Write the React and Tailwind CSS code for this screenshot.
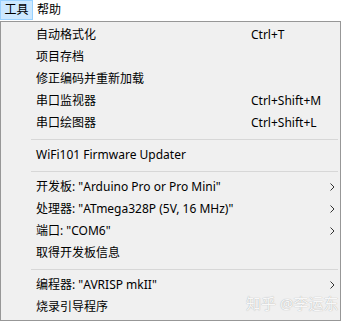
import React from "react";

const Arrow = () => (
  <svg width="5" height="8" viewBox="0 0 5 8" className="block">
    <path d="M0.5 0.5 L4 4 L0.5 7.5" fill="none" stroke="#333" strokeWidth="1" />
  </svg>
);

function Item({ label, shortcut, arrow }) {
  return (
    <div className="h-[22px] flex items-center pl-[35px] pr-[5px]">
      <div className="w-[215px] whitespace-nowrap">{label}</div>
      <div className="flex-1 whitespace-nowrap">{shortcut}</div>
      {arrow && <Arrow />}
    </div>
  );
}

function Sep() {
  return (
    <div className="h-[10px] flex items-center pl-[30px] pr-[2px]">
      <div className="h-px w-full bg-[#d7d7d7]" />
    </div>
  );
}

export default function App() {
  return (
    <div
      className="relative w-[341px] h-[321px] bg-white text-[12px] text-black overflow-hidden"
      style={{ fontFamily: '"Noto Sans", "Noto Sans CJK SC", sans-serif' }}
    >
      {/* menu bar */}
      <div className="h-[21px] flex items-start">
        <div className="h-[20px] w-[33px] bg-[#cce8ff] border border-[#99d1ff] flex items-center justify-center">
          工具
        </div>
        <div className="h-[20px] pl-[4px] flex items-center">帮助</div>
      </div>

      {/* dropdown */}
      <div className="w-[341px] h-[300px] border border-[#979797] bg-[#f0f0f0] py-[2px]">
        <Item label="自动格式化" shortcut="Ctrl+T" />
        <Item label="项目存档" />
        <Item label="修正编码并重新加载" />
        <Item label="串口监视器" shortcut="Ctrl+Shift+M" />
        <Item label="串口绘图器" shortcut="Ctrl+Shift+L" />
        <Sep />
        <Item label="WiFi101 Firmware Updater" />
        <Sep />
        <Item label={'开发板: "Arduino Pro or Pro Mini"'} arrow />
        <Item label={'处理器: "ATmega328P (5V, 16 MHz)"'} arrow />
        <Item label={'端口: "COM6"'} arrow />
        <Item label="取得开发板信息" />
        <Sep />
        <Item label={'编程器: "AVRISP mkII"'} arrow />
        <Item label="烧录引导程序" />
      </div>

      {/* watermark */}
      <div className="absolute left-[246px] top-[292px] text-[15px] text-[#f8f8f8] [text-shadow:0_0_1px_#9a9a9a] whitespace-nowrap">
        知乎 @李运东
      </div>
    </div>
  );
}
